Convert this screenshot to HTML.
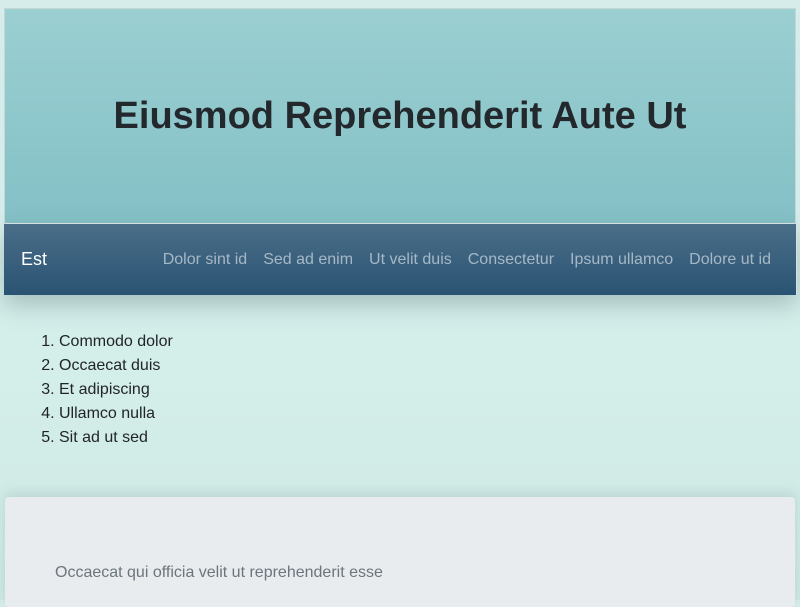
<!DOCTYPE html>
<html><head><style>
body{margin:0;width:800px;height:600px;overflow:hidden;background:linear-gradient(#d6ecea,#d4eeea 60%,#cfe8e4);font-family:"Liberation Sans",sans-serif;position:relative}
.hdr{position:absolute;left:4px;top:8px;width:790px;height:214px;border:1px solid #c9d6d6;border-bottom:2px solid #e0e6e6;background:linear-gradient(#9bcfd2,#83c0c6);display:flex;align-items:center;justify-content:center}
.hdr h1{margin:0;font-size:38px;font-weight:bold;color:#22282c}
.nav{position:absolute;left:4px;top:224px;width:792px;height:71px;background:linear-gradient(#4a6e88,#2a5373);box-shadow:0 10px 22px rgba(80,110,110,.35);border-right:1px solid #ddd}
.nav .b{position:absolute;left:17px;top:25px;color:#fff;font-size:18px}
.nav .l{position:absolute;right:25px;top:27px;color:#a6b8c6;font-size:16px}
.nav .l span{margin-left:16px}
ol{position:absolute;left:19px;top:330px;margin:0;padding-left:40px;font-size:16px;line-height:24px;color:#212529}
.card{position:absolute;left:5px;top:497px;width:790px;height:110px;background:#e8ecef;border-radius:4px;box-shadow:0 -4px 12px rgba(120,160,155,.25)}
.card p{position:absolute;left:50px;top:67px;margin:0;font-size:16px;color:#6c757d}
</style></head><body>
<div class="hdr"><h1>Eiusmod Reprehenderit Aute Ut</h1></div>
<div class="nav"><div class="b">Est</div><div class="l"><span>Dolor sint id</span><span>Sed ad enim</span><span>Ut velit duis</span><span>Consectetur</span><span>Ipsum ullamco</span><span>Dolore ut id</span></div></div>
<ol><li>Commodo dolor</li><li>Occaecat duis</li><li>Et adipiscing</li><li>Ullamco nulla</li><li>Sit ad ut sed</li></ol>
<div class="card"><p>Occaecat qui officia velit ut reprehenderit esse</p></div>
</body></html>
